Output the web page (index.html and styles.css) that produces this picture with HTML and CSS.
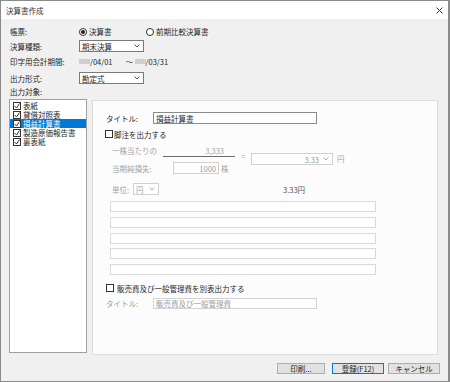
FILE: index.html
```html
<!DOCTYPE html>
<html lang="ja">
<head>
  <meta charset="UTF-8" />
  <title>決算書作成</title>
  <link rel="stylesheet" href="styles.css">
</head>
<body>

  <div class="dialog">
    <div class="titlebar">
      <span>決算書作成</span>
      <svg class="close" width="7" height="7" viewBox="0 0 7 7"><path d="M0.5 0.5l6 6M6.5 0.5l-6 6" stroke="#333" stroke-width="1" /></svg>
    </div>

    <div class="content">
      <!-- top settings -->
      <div class="form">
        <div>帳票:</div>
        <div class="radios">
          <span class="opt"><span class="radio on"></span>決算書</span>
          <span class="opt"><span class="radio"></span>前期比較決算書</span>
        </div>

        <div>決算種類:</div>
        <div>
          <div class="select">期末決算
            <svg width="6" height="4" viewBox="0 0 6 4"><polyline points="0.5,0.5 3,3 5.5,0.5" fill="none" stroke="#555" /></svg>
          </div>
        </div>

        <div>印字用会計期間:</div>
        <div class="period">
          <span class="redact"></span>/04/01
          <span class="tilde">～</span>
          <span class="redact"></span>/03/31
        </div>

        <div>出力形式:</div>
        <div>
          <div class="select">勘定式
            <svg width="6" height="4" viewBox="0 0 6 4"><polyline points="0.5,0.5 3,3 5.5,0.5" fill="none" stroke="#555" /></svg>
          </div>
        </div>

        <div>出力対象:</div>
        <div></div>
      </div>

      <div class="main">
        <div class="list">
          <div class="item"><svg class="cb" width="8" height="8" viewBox="0 0 8 8"><rect x=".5" y=".5" width="7" height="7" fill="#fff" stroke="#333" /><path d="M1.5 4l2 2 3-4.5" fill="none" stroke="#333" /></svg>表紙</div>
          <div class="item"><svg class="cb" width="8" height="8" viewBox="0 0 8 8"><rect x=".5" y=".5" width="7" height="7" fill="#fff" stroke="#333" /><path d="M1.5 4l2 2 3-4.5" fill="none" stroke="#333" /></svg>貸借対照表</div>
          <div class="item sel"><svg class="cb" width="8" height="8" viewBox="0 0 8 8"><rect x=".5" y=".5" width="7" height="7" fill="#fff" stroke="#333" /><path d="M1.5 4l2 2 3-4.5" fill="none" stroke="#333" /></svg>損益計算書</div>
          <div class="item"><svg class="cb" width="8" height="8" viewBox="0 0 8 8"><rect x=".5" y=".5" width="7" height="7" fill="#fff" stroke="#333" /><path d="M1.5 4l2 2 3-4.5" fill="none" stroke="#333" /></svg>製造原価報告書</div>
          <div class="item"><svg class="cb" width="8" height="8" viewBox="0 0 8 8"><rect x=".5" y=".5" width="7" height="7" fill="#fff" stroke="#333" /><path d="M1.5 4l2 2 3-4.5" fill="none" stroke="#333" /></svg>裏表紙</div>
        </div>

        <div class="panel">
          <div class="title-row">
            <span class="lbl">タイトル:</span>
            <div class="input">損益計算書</div>
          </div>

          <div class="chk-row">
            <svg class="cb" width="8" height="8" viewBox="0 0 8 8"><rect x=".5" y=".5" width="7" height="7" fill="#fff" stroke="#333" /></svg>
            脚注を出力する
          </div>

          <!-- per share fraction (disabled) -->
          <div class="frac">
            <div class="frac-left">
              <div class="frac-top">
                <span class="lbl">一株当たりの</span>
                <span class="num">3,333</span>
              </div>
              <div class="frac-bot">
                <span class="lbl">当期純損失:</span>
                <div class="input small">1000</div>
                <span class="unit-txt">株</span>
              </div>
            </div>
            <span class="eq">=</span>
            <div class="select wide">
              <span class="val">3.33</span>
              <svg width="6" height="4" viewBox="0 0 6 4"><polyline points="0.5,0.5 3,3 5.5,0.5" fill="none" stroke="#aaa" /></svg>
            </div>
            <span class="yen">円</span>
          </div>

          <div class="unit">
            <span class="lbl">単位:</span>
            <div class="select tiny">円
              <svg width="6" height="4" viewBox="0 0 6 4"><polyline points="0.5,0.5 3,3 5.5,0.5" fill="none" stroke="#aaa" /></svg>
            </div>
            <span class="result">3.33円</span>
          </div>

          <div class="boxes">
            <div class="box"></div>
            <div class="box"></div>
            <div class="box"></div>
            <div class="box"></div>
            <div class="box"></div>
          </div>

          <div class="chk-row second">
            <svg class="cb" width="8" height="8" viewBox="0 0 8 8"><rect x=".5" y=".5" width="7" height="7" fill="#fff" stroke="#333" /></svg>
            販売費及び一般管理費を別表出力する
          </div>

          <div class="title-row off">
            <span class="lbl">タイトル:</span>
            <div class="input">販売費及び一般管理費</div>
          </div>
        </div>
      </div>

      <div class="buttons">
        <button class="btn print">印刷...</button>
        <button class="btn save">登録(F12)</button>
        <button class="btn cancel">キャンセル</button>
      </div>
    </div>
  </div>

</body>
</html>
```

FILE: styles.css
```css
/* Window */
* {
  box-sizing: border-box;
}

body {
  margin: 0;
  background: #fff;
  font-family: "Noto Sans CJK JP", "Noto Sans", sans-serif;
  font-size: 7.5px;
  line-height: 9px;
  color: #1e1e1e;
}

.dialog {
  width: 450px;
  height: 382px;
  border: 1px solid #8a8a8a;
  border-right-width: 2px;
  background: #f0f0f0;
}

.titlebar {
  height: 18px;
  background: #fff;
  display: flex;
  align-items: center;
  justify-content: space-between;
  padding: 0 5px;
  color: #333;
}

.content {
  padding: 5px 8px 0;
}

/* Top settings grid */
.form {
  display: grid;
  grid-template-columns: 69px 1fr;
  grid-template-rows: 15px 14px 16px 18px 8px;
  align-items: center;
  padding-left: 1px;
}

.radios {
  display: flex;
  align-items: center;
}

.opt {
  display: flex;
  align-items: center;
  gap: 2px;
  width: 67px;
}

.radio {
  width: 8px;
  height: 8px;
  border: 1px solid #333;
  border-radius: 50%;
  background: #fff;
  display: flex;
  align-items: center;
  justify-content: center;
}

.radio.on::after {
  content: "";
  width: 4px;
  height: 4px;
  border-radius: 50%;
  background: #222;
}

.select {
  width: 65px;
  height: 12px;
  border: 1px solid #7a7a7a;
  background: #fff;
  display: flex;
  align-items: center;
  justify-content: space-between;
  padding: 0 3px 0 2px;
}

.period {
  display: flex;
  align-items: center;
}

.redact {
  display: inline-block;
  width: 11px;
  height: 5px;
  background: #cfcfcf;
}

.tilde {
  margin: 0 0 0 13px;
  width: 9px;
}

/* Main area */
.main {
  display: flex;
  align-items: flex-start;
  margin-top: 4px;
}

.list {
  width: 78px;
  height: 254px;
  border: 1px solid #a0a0a0;
  background: #fff;
  padding-top: 1px;
}

.item {
  display: flex;
  align-items: center;
  gap: 2px;
  height: 9px;
  line-height: 9px;
  padding-left: 3px;
  overflow: hidden;
}

.item.sel {
  background: #0078d7;
  color: #fff;
}

.cb {
  flex: none;
  display: block;
}

.panel {
  width: 346px;
  height: 255px;
  margin: 1px 0 0 5px;
  border: 1px solid #dcdcdc;
  background: #fcfcfc;
  padding: 11px 0 0 13px;
}

.title-row {
  display: flex;
  align-items: center;
  height: 12px;
}

.title-row .lbl {
  width: 47px;
}

.input {
  width: 164px;
  height: 12px;
  border: 1px solid #8a8a8a;
  background: #fff;
  padding-left: 2px;
  display: flex;
  align-items: center;
}

.title-row.off {
  margin-top: 6px;
  height: 11px;
  color: #9a9a9a;
}

.title-row.off .input {
  height: 11px;
  border-color: #d2d2d2;
}

.chk-row {
  display: flex;
  align-items: center;
  gap: 1px;
  height: 8px;
  margin: 6px 0 0 -1px;
}

.chk-row.second {
  margin: 9px 0 0 0;
  gap: 3px;
}

/* Fraction block (disabled) */
.frac {
  display: flex;
  align-items: flex-start;
  margin: 8px 0 0 6px;
  color: #a3a3a3;
}

.frac-left {
  width: 123px;
}

.frac-top {
  display: flex;
  height: 11px;
}

.frac-top .lbl {
  width: 51px;
}

.frac-top .num {
  flex: 1;
  border-bottom: 1px solid #6d6d6d;
  text-align: right;
  padding-right: 11px;
}

.frac-bot {
  display: flex;
  align-items: center;
  height: 12px;
  margin-top: 5px;
}

.frac-bot .lbl {
  width: 61px;
}

.input.small {
  width: 46px;
  border-color: #d0d0d0;
  justify-content: flex-end;
  padding: 0 2px 0 0;
  color: #999;
}

.unit-txt {
  margin-left: 2px;
}

.eq {
  margin: 5px 0 0 6px;
  width: 6px;
}

.select.wide {
  width: 82px;
  margin: 7px 0 0 4px;
  border-color: #d0d0d0;
  justify-content: flex-end;
  gap: 4px;
  color: #999;
}

.yen {
  margin: 8px 0 0 4px;
}

.unit {
  display: flex;
  align-items: center;
  height: 12px;
  margin: 9px 0 0 6px;
  color: #a3a3a3;
}

.unit .lbl {
  width: 21px;
}

.select.tiny {
  width: 26px;
  border-color: #d0d0d0;
}

.result {
  margin-left: 124px;
  color: #555;
}

.boxes {
  display: flex;
  flex-direction: column;
  gap: 4.75px;
  margin: 6px 0 0 4px;
}

.box {
  width: 266px;
  height: 11px;
  border: 1px solid #d9d9d9;
  background: #fff;
}

/* Buttons */
.buttons {
  display: flex;
  justify-content: flex-end;
  margin-top: 8px;
}

.btn {
  height: 11px;
  padding: 0;
  font-family: inherit;
  font-size: 7.5px;
  line-height: 9px;
  color: #1e1e1e;
  background: #e1e1e1;
  border: 1px solid #adadad;
}

.print {
  width: 48px;
}

.save {
  width: 52px;
  margin-left: 7px;
  border-color: #0078d7;
}

.cancel {
  width: 52px;
  margin-left: 4px;
}
```
